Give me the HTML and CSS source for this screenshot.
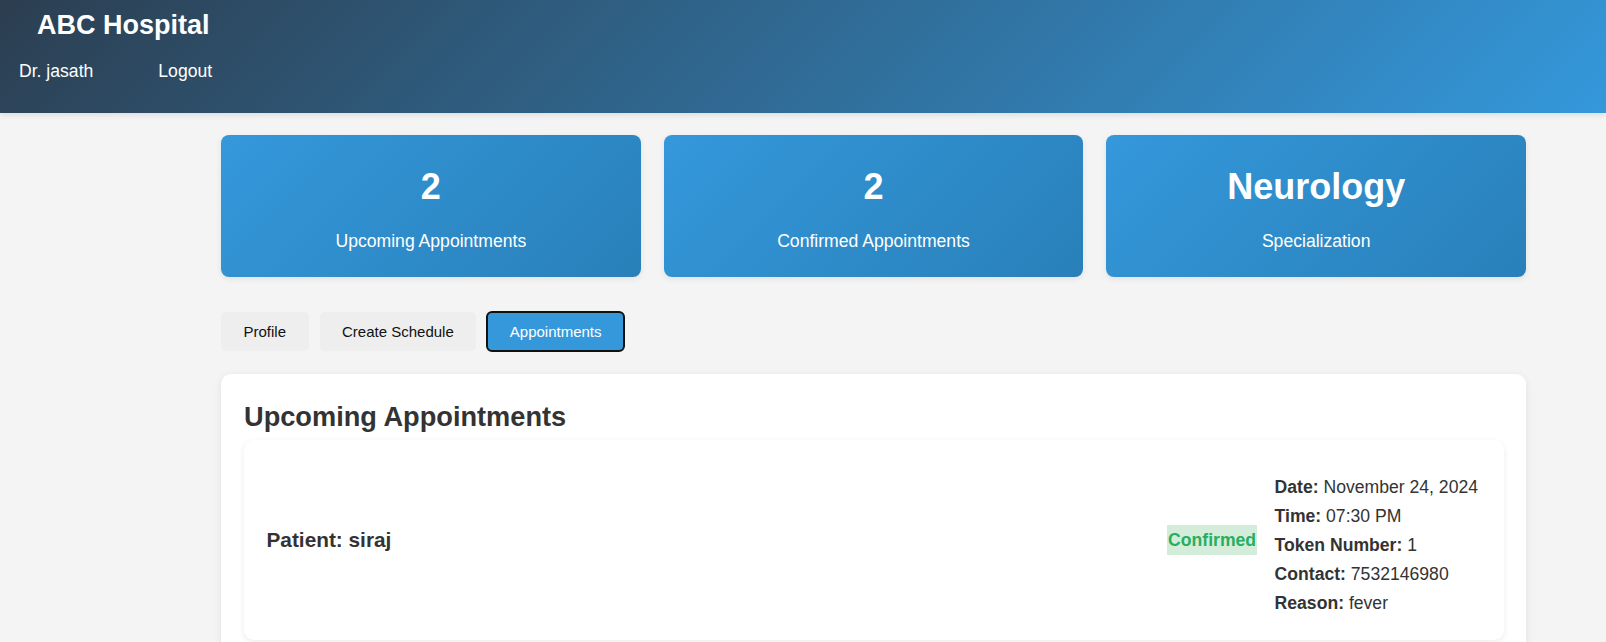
FILE: index.html
```html
<!DOCTYPE html>
<html lang="en">
<head>
<meta charset="utf-8">
<title>ABC Hospital - Doctor Dashboard</title>
<link rel="stylesheet" href="styles.css">
</head>
<body>
<header class="site-header">
  <h1 class="brand">ABC Hospital</h1>
  <nav class="nav">
    <a class="nav-link" href="#">Dr. jasath</a>
    <a class="nav-link" href="#">Logout</a>
  </nav>
</header>

<main class="main">
  <section class="stats">
    <div class="stat-card">
      <h3 class="stat-value">2</h3>
      <p class="stat-label">Upcoming Appointments</p>
    </div>
    <div class="stat-card">
      <h3 class="stat-value">2</h3>
      <p class="stat-label">Confirmed Appointments</p>
    </div>
    <div class="stat-card">
      <h3 class="stat-value">Neurology</h3>
      <p class="stat-label">Specialization</p>
    </div>
  </section>

  <div class="tabs">
    <button class="tab">Profile</button>
    <button class="tab">Create Schedule</button>
    <button class="tab tab-active">Appointments</button>
  </div>

  <section class="panel">
    <h2 class="panel-title">Upcoming Appointments</h2>
    <div class="appt-card">
      <h3 class="patient">Patient: siraj</h3>
      <div class="appt-right">
        <span class="status">Confirmed</span>
        <div class="details">
          <p class="detail"><strong>Date:</strong> November 24, 2024</p>
          <p class="detail"><strong>Time:</strong> 07:30 PM</p>
          <p class="detail"><strong>Token Number:</strong> 1</p>
          <p class="detail"><strong>Contact:</strong> 7532146980</p>
          <p class="detail"><strong>Reason:</strong> fever</p>
        </div>
      </div>
    </div>
  </section>
</main>
</body>
</html>
```

FILE: styles.css
```css
* {
  box-sizing: border-box;
}

html, body {
  margin: 0;
  padding: 0;
}

body {
  font-family: "Liberation Sans", Arial, sans-serif;
  background: #f4f4f4;
  color: #333;
  overflow: hidden;
}

.site-header {
  height: 113px;
  padding-top: 10px;
  background: linear-gradient(135deg, #2c3e50, #3498db);
  color: #fff;
  box-shadow: 0 2px 6px rgba(0, 0, 0, 0.1);
}

.brand {
  margin: 0;
  padding-left: 37px;
  font-size: 27px;
  font-weight: bold;
  line-height: 31px;
}

.nav {
  display: flex;
  gap: 65px;
  margin-top: 20px;
  padding-left: 19px;
}

.nav-link {
  color: #fff;
  text-decoration: none;
  font-size: 17.6px;
  line-height: 20px;
}

.main {
  padding: 22px 0 0 221px;
  width: 1526px;
}

.stats {
  display: grid;
  grid-template-columns: repeat(3, 1fr);
  gap: 23px;
}

.stat-card {
  height: 142px;
  padding-top: 32px;
  border-radius: 8px;
  background: linear-gradient(135deg, #3498db, #2980b9);
  color: #fff;
  text-align: center;
  box-shadow: 0 2px 6px rgba(0, 0, 0, 0.08);
}

.stat-value {
  margin: 0;
  font-size: 36px;
  line-height: 40px;
  font-weight: bold;
}

.stat-label {
  margin: 22px 0 0;
  font-size: 17.6px;
  line-height: 24px;
}

.tabs {
  display: flex;
  gap: 11px;
  margin-top: 35px;
}

.tab {
  height: 39px;
  padding: 0 22.5px;
  border: none;
  border-radius: 5px;
  background: #eeeeee;
  color: #111;
  font-family: "Liberation Sans", Arial, sans-serif;
  font-size: 15px;
}

.tab-active {
  background: #3498db;
  color: #fff;
  outline: 2px solid #111;
  outline-offset: -1px;
}

.panel {
  margin-top: 23px;
  padding: 27px 22px 22px 23px;
  background: #fff;
  border-radius: 10px;
  box-shadow: 0 2px 8px rgba(0, 0, 0, 0.08);
}

.panel-title {
  margin: 0 0 8px;
  font-size: 27.2px;
  line-height: 31px;
  font-weight: bold;
  color: #333;
}

.appt-card {
  display: flex;
  align-items: center;
  justify-content: space-between;
  height: 200px;
  padding: 0 26px 0 22.5px;
  background: #fff;
  border-radius: 10px;
  box-shadow: 0 2px 6px rgba(0, 0, 0, 0.08);
}

.patient {
  margin: 0;
  font-size: 20.8px;
  font-weight: bold;
  color: #333;
}

.appt-right {
  display: flex;
  align-items: center;
  gap: 17.5px;
}

.status {
  padding: 4.6px 1px;
  background: #d4edda;
  color: #27ae60;
  font-weight: bold;
  font-size: 17.6px;
  line-height: 20px;
}

.details {
  margin-top: 10px;
}

.detail {
  margin: 8.8px 0;
  font-size: 17.6px;
  line-height: 20.2px;
  color: #333;
}
```
